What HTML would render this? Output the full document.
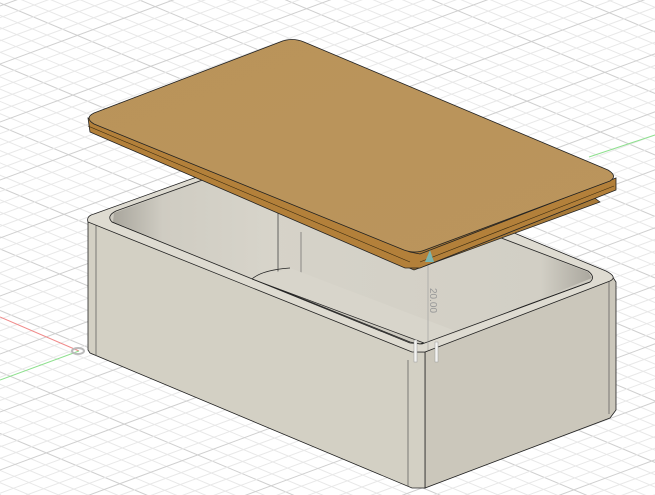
<!DOCTYPE html>
<html><head><meta charset="utf-8"><style>
html,body{margin:0;padding:0;background:#fff;width:655px;height:495px;overflow:hidden}
svg{display:block;position:absolute;left:0;top:0}
</style></head><body>
<svg id="s" width="655" height="495" viewBox="0 0 655 495" xmlns="http://www.w3.org/2000/svg">
<defs>
<linearGradient id="inner" x1="0" y1="0" x2="1" y2="0">
<stop offset="0" stop-color="#a9a69d"/><stop offset="0.3" stop-color="#cfccc2"/><stop offset="1" stop-color="#d8d5cb"/></linearGradient>
<linearGradient id="inr" x1="0" y1="0" x2="1" y2="0">
<stop offset="0" stop-color="#d6d3c9"/><stop offset="0.85" stop-color="#d2cfc5"/><stop offset="1" stop-color="#aaa79e"/></linearGradient>
<linearGradient id="lid" x1="0" y1="0" x2="1" y2="1">
<stop offset="0" stop-color="#b9935a"/><stop offset="1" stop-color="#bb955c"/></linearGradient>
</defs>
<g id="grid"></g>
<line x1="0" y1="317" x2="79" y2="351" stroke="#f08a8a" stroke-width="1"/>
<line x1="0" y1="380" x2="79" y2="351" stroke="#8fe08f" stroke-width="1"/>
<line x1="589" y1="157" x2="655" y2="135" stroke="#8fe08f" stroke-width="1"/>
<ellipse cx="78" cy="351" rx="6" ry="3" fill="none" stroke="#bbb" stroke-width="2"/>
<polygon points="425,352 612,276 616,282 616,410 610,418 425,488" fill="#cbc7bb" stroke="#222" stroke-width="0.8"/>
<polygon points="88,222 96,224 418,352 425,352 425,488 412,488 90,353 88,350" fill="#d3d0c4" stroke="#222" stroke-width="0.8"/>
<line x1="96" y1="224" x2="96" y2="356" stroke="#555" stroke-width="0.7"/>
<line x1="408" y1="360" x2="408" y2="486" stroke="#555" stroke-width="0.7"/>
<line x1="609" y1="282" x2="609" y2="414" stroke="#555" stroke-width="0.7"/>
<path d="M88,222 Q86,216 94,214 L294,142 L606,271 Q618,277 610,281 L425,352 L412,352 Z" fill="#dedbd1" stroke="#222" stroke-width="0.8"/>
<path d="M112,222 Q106,216 116,211 L278,153 L588,271 Q596,277 590,282 L420,344 L410,342 Z" fill="#cdcac0" stroke="#222" stroke-width="0.8"/>
<polygon points="114,213 278,154 278,283 250,279 113,222" fill="url(#inner)"/>
<polygon points="278,154 588,272 592,278 453,334 250,279 278,283" fill="url(#inr)"/>
<line x1="278" y1="150" x2="278" y2="282" stroke="#333" stroke-width="0.7"/>
<line x1="301" y1="232" x2="301" y2="290" stroke="#555" stroke-width="0.6"/>
<polygon points="252,279 290,268 458,332 424,343" fill="#d8d5cb"/>
<path d="M252,279 Q262,270 290,268" fill="none" stroke="#222" stroke-width="0.7"/>
<line x1="252" y1="279" x2="424" y2="343" stroke="#222" stroke-width="0.7"/>
<polyline points="112,222 410,343 422,344 590,282" fill="none" stroke="#222" stroke-width="0.8"/>
<line x1="428" y1="262" x2="428" y2="350" stroke="#999" stroke-width="0.6"/>
<text x="0" y="0" transform="translate(430,288) rotate(90)" font-family="Liberation Sans, sans-serif" font-size="10" fill="#999">20.00</text>
<rect x="414" y="340" width="3" height="22" fill="#f4f4f2" stroke="#999" stroke-width="0.5"/>
<rect x="435" y="342" width="3" height="20" fill="#f4f4f2" stroke="#999" stroke-width="0.5"/>
<polygon points="106,128 592,196 600,202 414,270 110,140" fill="#a87a38" stroke="#222" stroke-width="0.7"/>
<polygon points="88,118 410,252 420,254 616,178 616,190 420,268 405,268 90,132" fill="#b3803a" stroke="#222" stroke-width="0.8"/>
<line x1="88" y1="126" x2="410" y2="262" stroke="#3a2a10" stroke-width="0.6"/>
<line x1="420" y1="262" x2="614" y2="186" stroke="#3a2a10" stroke-width="0.6"/>
<path d="M280,42 Q292,37 304,42 L608,170 Q618,176 610,181 L425,250 Q415,254 404,250 L94,124 Q84,118 94,113 Z" fill="url(#lid)" stroke="#222" stroke-width="0.8"/>
<polygon points="425,262 430,250 434,262" fill="#7ab5b0"/>
</svg>
<script>
var g=document.getElementById('grid'),h='';
for(var i=-60;i<80;i++){
 var c=i*12.3+3; var col=(i%5==0)?'#cfcfcf':'#e8e8e8';
 h+='<line x1="-100" y1="'+(c-42)+'" x2="760" y2="'+(c+319)+'" stroke="'+col+'" stroke-width="1"/>';
 var d=i*11.6+6;
 h+='<line x1="-100" y1="'+(d+37)+'" x2="760" y2="'+(d-281)+'" stroke="'+col+'" stroke-width="1"/>';
}
g.innerHTML=h;
</script>
</body></html>
